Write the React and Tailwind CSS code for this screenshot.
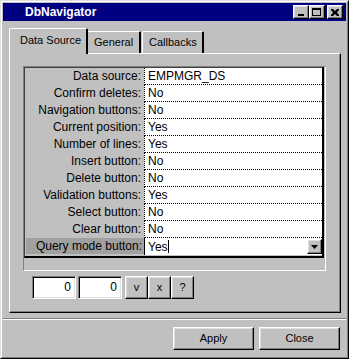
import React from "react";

const rows = [
  ["Data source:", "EMPMGR_DS"],
  ["Confirm deletes:", "No"],
  ["Navigation buttons:", "No"],
  ["Current position:", "Yes"],
  ["Number of lines:", "Yes"],
  ["Insert button:", "No"],
  ["Delete button:", "No"],
  ["Validation buttons:", "Yes"],
  ["Select button:", "No"],
  ["Clear button:", "No"],
];

// raised win95 look
const raised =
  "border border-t-white border-l-white border-r-black border-b-black shadow-[inset_-1px_-1px_0_#808080,inset_1px_1px_0_#dfdfdf] bg-[#c0c0c0]";
const sunken =
  "border border-t-[#808080] border-l-[#808080] border-r-white border-b-white shadow-[inset_1px_1px_0_#000,inset_-1px_-1px_0_#dfdfdf]";

const TitleButton = ({ children, className = "" }) => (
  <div className={`w-[16px] h-[14px] flex items-center justify-center ${raised} ${className}`}>
    {children}
  </div>
);

const TitleBar = () => (
  <div className="h-[18px] bg-[#000080] flex items-center pl-[22px] pr-[3px]">
    <span className="text-white font-bold text-[12px] leading-none flex-1">DbNavigator</span>
    <TitleButton>
      <div className="w-[6px] h-[2px] bg-black mt-[6px] -ml-[1px]"></div>
    </TitleButton>
    <TitleButton>
      <div className="w-[9px] h-[8px] border border-black border-t-2 -ml-[1px]"></div>
    </TitleButton>
    <TitleButton className="ml-[2px]">
      <svg width="8" height="7" viewBox="0 0 8 7" className="-ml-[1px]">
        <path d="M0 0h2l2 2 2-2h2v1L6 3.5 8 6v1H6L4 5 2 7H0V6l2-2.5L0 1z" fill="#000" />
      </svg>
    </TitleButton>
  </div>
);

const Tabs = () => (
  <div className="flex items-end h-[25px]">
    <div className="relative z-10 w-[79px] h-[26px] -mb-px bg-[#c0c0c0] border-l border-t border-t-white border-l-white border-r-2 border-r-black rounded-tl-[2px] rounded-tr-[2px] pl-[10px] pt-[6px] text-[11px] leading-none">
      Data Source
    </div>
    <div className="w-[53px] h-[22px] border-l-0 border-t border-t-white border-r-2 border-r-black rounded-tr-[2px] pl-[6px] pt-[5px] text-[11px] leading-none">
      General
    </div>
    <div className="ml-[1px] w-[62px] h-[22px] border-l border-t border-t-white border-l-white border-r-2 border-r-black rounded-tl-[2px] rounded-tr-[2px] pl-[6px] pt-[5px] text-[11px] leading-none">
      Callbacks
    </div>
  </div>
);

const Grid = () => (
  <div className="w-[300px] h-[191px] border-t border-l border-t-[#404040] border-l-[#404040] border-r-2 border-b-2 border-r-black border-b-black flex flex-col">
    {rows.map(([label, value]) => (
      <div key={label} className="flex h-[17px]">
        <div className="w-[119px] pr-[3px] text-right text-[12px] leading-[16px]">{label}</div>
        <div className="flex-1 bg-white border-l border-black border-b border-b-black border-dotted pl-[3px] text-[12px] leading-[16px]">
          {value}
        </div>
      </div>
    ))}
    <div className="flex h-[17px]">
      <div className="w-[119px] pl-[1px] pr-0">
        <div className="h-[16px] bg-[#a0a0a0] pr-[2px] text-right text-[12px] leading-[16px]">Query mode button:</div>
      </div>
      <div className="flex-1 bg-white border-l border-black flex items-center pl-[3px]">
        <span className="text-[12px] leading-[16px]">Yes</span>
        <div className="w-px h-[13px] bg-black"></div>
        <div className="flex-1"></div>
        <div className={`w-[15px] h-[15px] flex items-center justify-center ${raised}`}>
          <svg width="7" height="4" viewBox="0 0 7 4">
            <path d="M0 0h7L3.5 4z" fill="#000" />
          </svg>
        </div>
      </div>
    </div>
  </div>
);

const NumBox = () => (
  <div className={`w-[44px] h-[23px] bg-white ${sunken} text-right pr-[4px] text-[12px] leading-[21px]`}>0</div>
);

const SmallButton = ({ label }) => (
  <div className={`w-[23px] h-[23px] ${raised} flex items-center justify-center text-[11px] leading-none`}>
    {label}
  </div>
);

const Panel = () => (
  <div className="w-[332px] h-[260px] border-t border-l border-t-white border-l-white border-r border-b border-r-black border-b-black shadow-[inset_-1px_-1px_0_#808080] pl-[13px] pt-[12px]">
    <div className="w-[303px] h-[205px] border-t border-l border-t-[#808080] border-l-[#808080] border-r border-b border-r-white border-b-white">
      <Grid />
    </div>
    <div className="flex ml-[9px] mt-[5px] gap-[2px]">
      <NumBox />
      <NumBox />
      <div className="flex ml-[1px]">
        <SmallButton label="v" />
        <SmallButton label="x" />
        <SmallButton label="?" />
      </div>
    </div>
  </div>
);

const DialogButton = ({ label }) => (
  <div className={`w-[81px] h-[23px] ${raised} flex items-center justify-center text-[11px] leading-none`}>
    {label}
  </div>
);

export default function App() {
  return (
    <div
      className="w-[349px] h-[359px] bg-[#c0c0c0] border border-t-[#dfdfdf] border-l-[#dfdfdf] border-r-black border-b-black text-black"
      style={{ fontFamily: '"Liberation Sans", Arial, sans-serif' }}
    >
      <div className="h-full border border-t-white border-l-white border-r-[#808080] border-b-[#808080] p-px flex flex-col">
        <TitleBar />
        <div className="pl-[6px] pt-[7px]">
          <Tabs />
          <Panel />
        </div>
        <div className="mt-[5px] h-[2px] border-t border-t-[#808080] border-b border-b-white"></div>
        <div className="flex justify-end gap-[5px] mt-[7px] pr-[6px]">
          <DialogButton label="Apply" />
          <DialogButton label="Close" />
        </div>
      </div>
    </div>
  );
}
